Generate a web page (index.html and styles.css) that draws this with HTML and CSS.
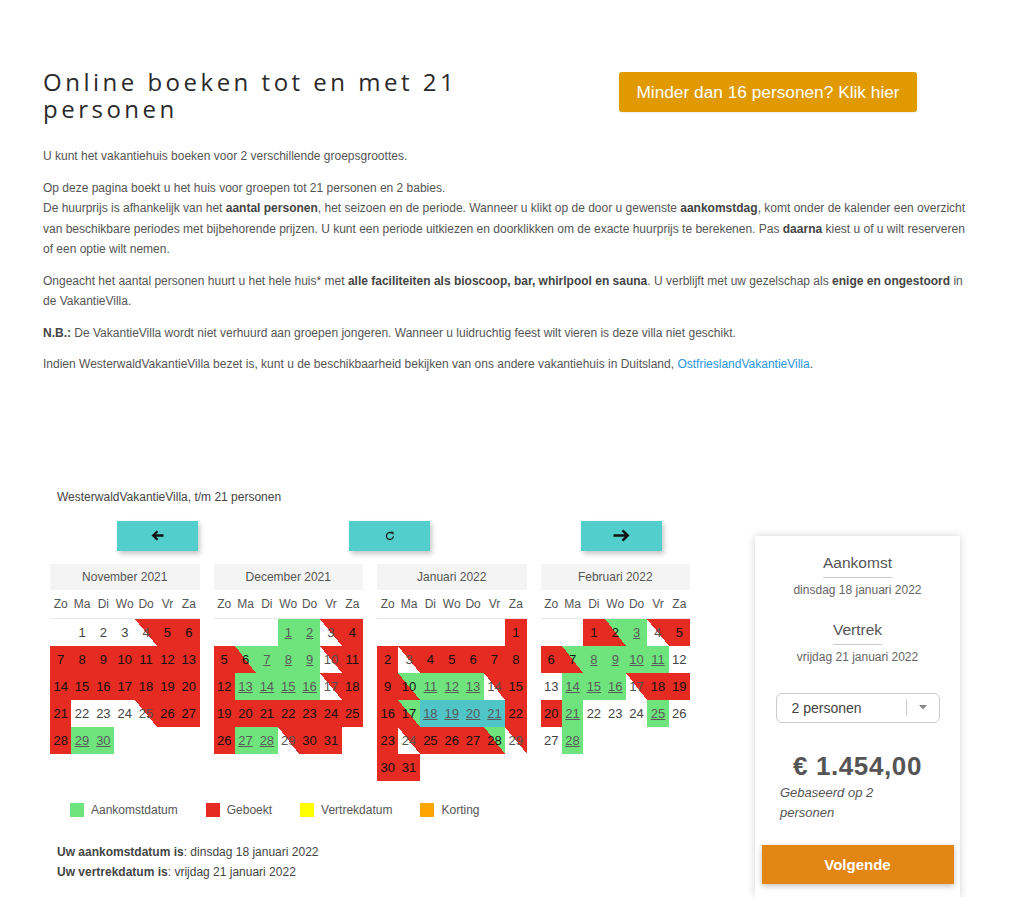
FILE: index.html
```html
<!DOCTYPE html>
<html lang="nl">
<head>
<meta charset="utf-8">
<title>Online boeken tot en met 21 personen</title>
<link rel="stylesheet" href="styles.css">
</head>
<body>
<div class="page">
  <header class="top">
    <h1 class="title">Online boeken tot en met 21 personen</h1>
    <a class="btn-small" href="#">Minder dan 16 personen? Klik hier</a>
  </header>

  <div class="intro">
    <p>U kunt het vakantiehuis boeken voor 2 verschillende groepsgroottes.</p>
    <p>Op deze pagina boekt u het huis voor groepen tot 21 personen en 2 babies.<br>De huurprijs is afhankelijk van het <b>aantal personen</b>, het seizoen en de periode. Wanneer u klikt op de door u gewenste <b>aankomstdag</b>, komt onder de kalender een overzicht van beschikbare periodes met bijbehorende prijzen. U kunt een periode uitkiezen en doorklikken om de exacte huurprijs te berekenen. Pas <b>daarna</b> kiest u of u wilt reserveren of een optie wilt nemen.</p>
    <p>Ongeacht het aantal personen huurt u het hele huis* met <b>alle faciliteiten als bioscoop, bar, whirlpool en sauna</b>. U verblijft met uw gezelschap als <b>enige en ongestoord</b> in de VakantieVilla.</p>
    <p><b>N.B.:</b> De VakantieVilla wordt niet verhuurd aan groepen jongeren. Wanneer u luidruchtig feest wilt vieren is deze villa niet geschikt.</p>
    <p>Indien WesterwaldVakantieVilla bezet is, kunt u de beschikbaarheid bekijken van ons andere vakantiehuis in Duitsland, <a href="#">OstfrieslandVakantieVilla</a>.</p>
  </div>

  <section class="booking">
    <div class="cal-area">
      <div class="cal-title">WesterwaldVakantieVilla, t/m 21 personen</div>

      <div class="nav">
        <button class="nav-btn" type="button" aria-label="Vorige">
          <svg width="13" height="11" viewBox="0 0 13 11"><path d="M12.5 5.5H2.5M6.5 1.3L2.2 5.5l4.3 4.2" stroke="#111" stroke-width="2.3" fill="none"/></svg>
        </button>
        <button class="nav-btn" type="button" aria-label="Vernieuwen">
          <svg width="10" height="10" viewBox="0 0 10 10"><path d="M8.4 5.2A3.5 3.5 0 1 1 7 2.2" stroke="#222" stroke-width="1.3" fill="none"/><path d="M5.6 0.6L8.8 0.9 8.3 4z" fill="#222"/></svg>
        </button>
        <button class="nav-btn" type="button" aria-label="Volgende maand">
          <svg width="17" height="13" viewBox="0 0 17 13"><path d="M0.5 6.5H14.5M9.5 1.4L14.7 6.5l-5.2 5.1" stroke="#111" stroke-width="2.5" fill="none"/></svg>
        </button>
      </div>

      <div class="months">
        <div class="month">
          <div class="mhead">November 2021</div>
          <div class="dnames"><span>Zo</span><span>Ma</span><span>Di</span><span>Wo</span><span>Do</span><span>Vr</span><span>Za</span></div>
          <div class="days">
            <span></span><span>1</span><span>2</span><span>3</span><span class="wr">4</span><span class="b">5</span><span class="b">6</span>
            <span class="b">7</span><span class="b">8</span><span class="b">9</span><span class="b">10</span><span class="b">11</span><span class="b">12</span><span class="b">13</span>
            <span class="b">14</span><span class="b">15</span><span class="b">16</span><span class="b">17</span><span class="b">18</span><span class="b">19</span><span class="b">20</span>
            <span class="b">21</span><span>22</span><span>23</span><span>24</span><span class="wr">25</span><span class="b">26</span><span class="b">27</span>
            <span class="b">28</span><span class="g"><a href="#">29</a></span><span class="g"><a href="#">30</a></span>
          </div>
        </div>

        <div class="month">
          <div class="mhead">December 2021</div>
          <div class="dnames"><span>Zo</span><span>Ma</span><span>Di</span><span>Wo</span><span>Do</span><span>Vr</span><span>Za</span></div>
          <div class="days">
            <span></span><span></span><span></span><span class="g"><a href="#">1</a></span><span class="g"><a href="#">2</a></span><span class="wr">3</span><span class="b">4</span>
            <span class="b">5</span><span class="rg">6</span><span class="g"><a href="#">7</a></span><span class="g"><a href="#">8</a></span><span class="g"><a href="#">9</a></span><span class="wr">10</span><span class="b">11</span>
            <span class="b">12</span><span class="g"><a href="#">13</a></span><span class="g"><a href="#">14</a></span><span class="g"><a href="#">15</a></span><span class="g"><a href="#">16</a></span><span class="wr">17</span><span class="b">18</span>
            <span class="b">19</span><span class="b">20</span><span class="b">21</span><span class="b">22</span><span class="b">23</span><span class="b">24</span><span class="b">25</span>
            <span class="b">26</span><span class="g"><a href="#">27</a></span><span class="g"><a href="#">28</a></span><span class="wr">29</span><span class="b">30</span><span class="b">31</span>
          </div>
        </div>

        <div class="month">
          <div class="mhead">Januari 2022</div>
          <div class="dnames"><span>Zo</span><span>Ma</span><span>Di</span><span>Wo</span><span>Do</span><span>Vr</span><span>Za</span></div>
          <div class="days">
            <span></span><span></span><span></span><span></span><span></span><span></span><span class="b">1</span>
            <span class="b">2</span><span class="wr">3</span><span class="b">4</span><span class="b">5</span><span class="b">6</span><span class="b">7</span><span class="b">8</span>
            <span class="b">9</span><span class="rg">10</span><span class="g"><a href="#">11</a></span><span class="g"><a href="#">12</a></span><span class="g"><a href="#">13</a></span><span class="wr">14</span><span class="b">15</span>
            <span class="b">16</span><span class="rg">17</span><span class="s"><a href="#">18</a></span><span class="s"><a href="#">19</a></span><span class="s"><a href="#">20</a></span><span class="s"><a href="#">21</a></span><span class="b">22</span>
            <span class="b">23</span><span class="wr">24</span><span class="b">25</span><span class="b">26</span><span class="b">27</span><span class="rg">28</span><span class="wr">29</span>
            <span class="b">30</span><span class="b">31</span>
          </div>
        </div>

        <div class="month">
          <div class="mhead">Februari 2022</div>
          <div class="dnames"><span>Zo</span><span>Ma</span><span>Di</span><span>Wo</span><span>Do</span><span>Vr</span><span>Za</span></div>
          <div class="days">
            <span></span><span></span><span class="b">1</span><span class="rg">2</span><span class="g"><a href="#">3</a></span><span class="wr">4</span><span class="b">5</span>
            <span class="b">6</span><span class="rg">7</span><span class="g"><a href="#">8</a></span><span class="g"><a href="#">9</a></span><span class="g"><a href="#">10</a></span><span class="g"><a href="#">11</a></span><span>12</span>
            <span>13</span><span class="g"><a href="#">14</a></span><span class="g"><a href="#">15</a></span><span class="g"><a href="#">16</a></span><span class="wr">17</span><span class="b">18</span><span class="b">19</span>
            <span class="b">20</span><span class="g"><a href="#">21</a></span><span>22</span><span>23</span><span>24</span><span class="g"><a href="#">25</a></span><span>26</span>
            <span>27</span><span class="g"><a href="#">28</a></span>
          </div>
        </div>
      </div>

      <div class="legend">
        <div class="lg-item"><span class="sw sw-green"></span>Aankomstdatum</div>
        <div class="lg-item"><span class="sw sw-red"></span>Geboekt</div>
        <div class="lg-item"><span class="sw sw-yellow"></span>Vertrekdatum</div>
        <div class="lg-item"><span class="sw sw-orange"></span>Korting</div>
      </div>

      <div class="result">
        <div><b>Uw aankomstdatum is</b>: dinsdag 18 januari 2022</div>
        <div><b>Uw vertrekdatum is</b>: vrijdag 21 januari 2022</div>
      </div>
    </div>

    <aside class="card">
      <div class="lbl">Aankomst</div>
      <div class="date">dinsdag 18 januari 2022</div>
      <div class="lbl lbl-2">Vertrek</div>
      <div class="date">vrijdag 21 januari 2022</div>
      <div class="select">
        <span class="sel-text">2 personen</span>
        <span class="sel-arrow"><svg width="8" height="5" viewBox="0 0 8 5"><path d="M0 0h8L4 4.5z" fill="#888"/></svg></span>
      </div>
      <div class="price">€ 1.454,00</div>
      <p class="based">Gebaseerd op 2 personen</p>
      <a class="btn-next" href="#">Volgende</a>
    </aside>
  </section>
</div>
</body>
</html>
```

FILE: styles.css
```css
* { box-sizing: border-box; }

body {
  margin: 0;
  background: #fff;
  font-family: "Liberation Sans", Arial, sans-serif;
  color: #555;
}

.page {
  width: 1022px;
  padding: 68px 0 0 43px;
}

/* header */
.top {
  display: flex;
  align-items: flex-start;
}

.title {
  width: 576px;
  margin: 0;
  padding-right: 50px;
  font-family: "Open Sans", "Liberation Sans", sans-serif;
  font-weight: 400;
  font-size: 24px;
  line-height: 27px;
  letter-spacing: 3.5px;
  color: #2a2a2a;
}

.btn-small {
  display: block;
  width: 298px;
  height: 40px;
  margin-top: 4px;
  line-height: 40px;
  text-align: center;
  background: #e09a00;
  color: #fff;
  font-size: 17.3px;
  border-radius: 3px;
  text-decoration: none;
  box-shadow: 0 1px 2px rgba(0,0,0,.08);
}

/* intro text */
.intro {
  display: flow-root;
  width: 934px;
  margin-top: 24px;
  font-size: 12px;
  line-height: 20.5px;
  color: #555;
}

.intro p { margin: 0 0 11px; }
.intro b { color: #444; }
.intro a { color: #2b96dd; text-decoration: none; }

/* booking */
.booking {
  display: flex;
  align-items: flex-start;
  margin-top: 102px;
}

.cal-area { width: 712px; }

.cal-title {
  padding-left: 14px;
  font-size: 12px;
  line-height: 18px;
  color: #444;
}

.nav {
  display: grid;
  grid-template-columns: repeat(3, 232px);
  justify-items: center;
  margin: 15px 0 0 -1.5px;
}

.nav-btn {
  width: 81px;
  height: 30px;
  border: 0;
  padding: 0;
  background: #52cfcc;
  box-shadow: 2px 3px 5px rgba(0,0,0,.22);
  display: flex;
  align-items: center;
  justify-content: center;
}

.months {
  display: grid;
  grid-template-columns: repeat(4, 149.5px);
  column-gap: 14px;
  align-items: start;
  margin: 13px 0 0 7px;
}

.mhead {
  height: 26.5px;
  line-height: 26.5px;
  background: #f4f4f4;
  text-align: center;
  font-size: 12px;
  color: #555;
}

.dnames {
  display: grid;
  grid-template-columns: repeat(7, 1fr);
  align-items: center;
  height: 28.5px;
  border-bottom: 1px solid #e8e8e8;
  text-align: center;
  font-size: 12px;
  color: #555;
}

.days {
  display: grid;
  grid-template-columns: repeat(7, 1fr);
  grid-auto-rows: 27px;
}

.days span {
  display: flex;
  align-items: center;
  justify-content: center;
  font-size: 13px;
  color: #444;
}

.days a { color: #5a5a5a; text-decoration: underline; }

.days .b { background: #e62b22; color: #111; }
.days .g { background: #6fe47d; }
.days .s { background: #4fc5c7; }
.days .wr { background: linear-gradient(to top right, #fff 50%, #e62b22 50%); color: #555; }
.days .rw { background: linear-gradient(to top right, #e62b22 50%, #fff 50%); color: #555; }
.days .rg { background: linear-gradient(to top right, #e62b22 50%, #6fe47d 50%); color: #111; }
.days .gr { background: linear-gradient(to top right, #6fe47d 50%, #e62b22 50%); color: #111; }

/* legend */
.legend {
  display: flex;
  align-items: center;
  margin-top: 21px;
  padding-left: 27px;
  font-size: 12px;
  line-height: 16px;
  color: #555;
}

.lg-item {
  display: flex;
  align-items: center;
  margin-right: 28px;
}

.sw {
  width: 14px;
  height: 14px;
  margin-right: 7px;
}

.sw-green { background: #6fe47d; }
.sw-red { background: #e62b22; }
.sw-yellow { background: #ffff00; }
.sw-orange { background: #ffa500; }

.result {
  margin-top: 24px;
  padding-left: 14px;
  font-size: 12px;
  line-height: 20px;
  color: #444;
}

/* right card */
.card {
  width: 205px;
  margin-top: 48px;
  padding: 18px 0 13px;
  background: #fff;
  box-shadow: 0 0 8px rgba(0,0,0,.18);
  display: flex;
  flex-direction: column;
  align-items: center;
}

.lbl {
  padding-bottom: 5px;
  border-bottom: 1px solid #ccc;
  font-size: 15.5px;
  line-height: 18px;
  color: #555;
}

.lbl-2 { margin-top: 22.5px; }

.date {
  margin-top: 3px;
  font-size: 12px;
  line-height: 18px;
  color: #666;
}

.select {
  display: flex;
  align-items: center;
  width: 164px;
  height: 30px;
  margin-top: 26.5px;
  padding-left: 15px;
  border: 1px solid #ccc;
  border-radius: 6px;
  font-size: 14px;
  color: #444;
}

.sel-arrow {
  display: flex;
  align-items: center;
  justify-content: center;
  width: 33px;
  height: 17px;
  margin-left: auto;
  border-left: 1px solid #ccc;
}

.price {
  margin-top: 28.5px;
  font-size: 26px;
  line-height: 30px;
  font-weight: 700;
  letter-spacing: 0.6px;
  color: #555;
}

.based {
  align-self: flex-start;
  width: 130px;
  margin: 2px 0 0 25px;
  font-size: 13px;
  line-height: 20px;
  font-style: italic;
  color: #555;
}

.btn-next {
  display: block;
  width: 192px;
  height: 39px;
  margin-top: 22px;
  line-height: 39px;
  text-align: center;
  background: #e38614;
  color: #fff;
  font-size: 15px;
  font-weight: 700;
  text-decoration: none;
  box-shadow: 0 2px 6px rgba(0,0,0,.25);
}
```
